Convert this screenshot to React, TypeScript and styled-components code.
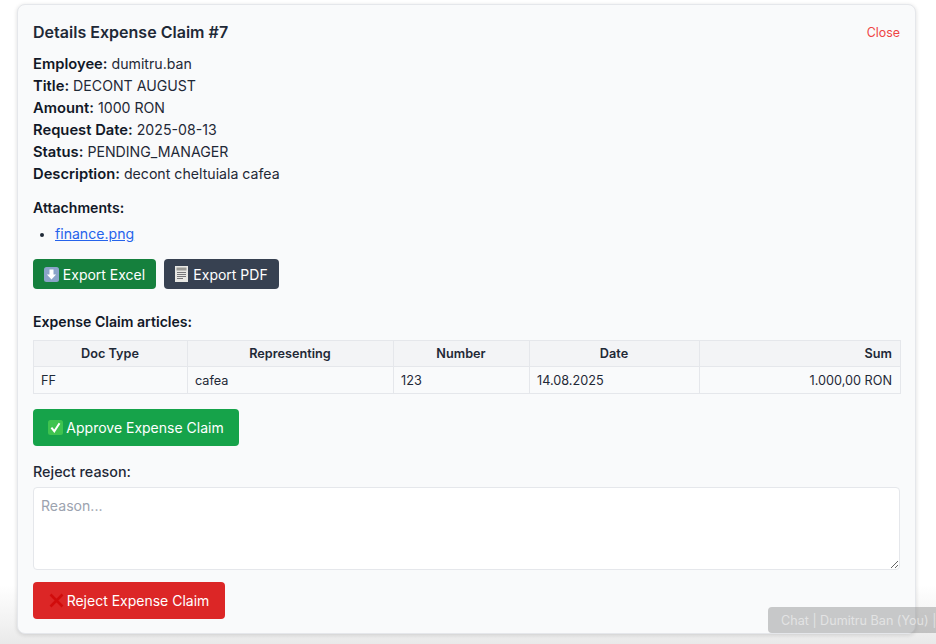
import React from "react";
import styled, { createGlobalStyle } from "styled-components";

const Global = createGlobalStyle`
  html, body { margin: 0; padding: 0; background: #fff; }
  body { font-family: Inter, "Liberation Sans", sans-serif; color: #1f2937; overflow: hidden; }
  * { box-sizing: border-box; }
`;

const Page = styled.div`
  position: relative;
  width: 936px;
  height: 644px;
  padding: 4px 20px 0 17px;
  overflow: hidden;
  background: linear-gradient(180deg, #fff 0, #fff 585px, #f1f1f1 625px, #e9e9e9 644px);
`;

const Card = styled.section`
  height: 630px;
  padding: 15px 15px 0 15px;
  background: #f9fafb;
  border: 1px solid #e5e7eb;
  border-radius: 8px;
  box-shadow: 0 1px 4px rgba(0, 0, 0, 0.14);
`;

const Header = styled.header`
  display: flex;
  justify-content: space-between;
  align-items: center;
  height: 24px;
  margin-bottom: 9px;
`;

const Title = styled.h2`
  margin: 0;
  font-size: 16.05px;
  line-height: 24px;
  font-weight: 600;
  color: #1f2937;
`;

const CloseLink = styled.a`
  font-size: 12.4px;
  color: #ef4444;
`;

const Info = styled.div`
  font-size: 14.15px;
  line-height: 22px;
  color: #1f2937;
`;

const InfoRow = styled.div`
  height: 22px;
`;

const Strong = styled.strong`
  font-size: 14.75px;
  font-weight: 600;
  color: #111827;
`;

const SectionLabel = styled.div<{ $top: number }>`
  margin-top: ${(p) => p.$top}px;
  font-size: 14.1px;
  line-height: 22px;
  font-weight: 600;
  color: #111827;
`;

const FileList = styled.ul`
  margin: 4px 0 0;
  padding: 0 0 0 22px;
  font-size: 14.1px;
  line-height: 22px;
  li::marker { font-size: 12px; }
`;

const FileLink = styled.a`
  color: #2563eb;
  text-decoration: underline;
`;

const Actions = styled.div`
  display: flex;
  gap: 8px;
  margin-top: 14px;
`;

const Button = styled.button<{ $bg: string; $w: number; $h: number; $gap: number }>`
  display: inline-flex;
  align-items: center;
  justify-content: center;
  gap: ${(p) => p.$gap}px;
  width: ${(p) => p.$w}px;
  height: ${(p) => p.$h}px;
  padding: 0;
  border: 0;
  border-radius: 4px;
  background: ${(p) => p.$bg};
  color: #fff;
  font-family: inherit;
  font-size: 14px;
`;

const Table = styled.table`
  width: 867px;
  margin-top: 7px;
  border-collapse: collapse;
  table-layout: fixed;
  font-size: 12.7px;
  color: #1f2937;
`;

const Th = styled.th<{ $w: number; $right?: boolean }>`
  width: ${(p) => p.$w}px;
  height: 26px;
  padding: 0 8px 0 7px;
  border: 1px solid #e5e7eb;
  background: #f3f4f6;
  font-weight: 600;
  text-align: ${(p) => (p.$right ? "right" : "center")};
`;

const Td = styled.td<{ $right?: boolean }>`
  height: 27px;
  padding: 0 8px 0 7px;
  border: 1px solid #e5e7eb;
  text-align: ${(p) => (p.$right ? "right" : "left")};
`;

const ApproveWrap = styled.div`
  margin-top: 15px;
`;

const FieldLabel = styled.label`
  display: block;
  margin-top: 15px;
  font-size: 14.35px;
  line-height: 22px;
  font-weight: 500;
  color: #1f2937;
`;

const Reason = styled.textarea`
  display: block;
  width: 867px;
  height: 83px;
  margin-top: 4px;
  padding: 8px 7px;
  border: 1px solid #e5e7eb;
  border-radius: 4px;
  background: #fff;
  font-family: inherit;
  font-size: 14.1px;
  line-height: 20px;
  &::placeholder { color: #9ca3af; }
`;

const RejectWrap = styled.div`
  margin-top: 12px;
`;

const ChatBar = styled.div`
  position: absolute;
  left: 768px;
  top: 607px;
  width: 180px;
  height: 26px;
  padding: 1px 0 0 13px;
  border-radius: 4px;
  background: rgba(130, 130, 130, 0.42);
  color: rgba(255, 255, 255, 0.5);
  font-size: 12.6px;
  line-height: 26px;
  white-space: nowrap;
`;

const DownloadIcon = () => (
  <svg width="15" height="15" viewBox="0 0 15 15" aria-hidden="true">
    <rect width="15" height="15" rx="2.5" fill="#8ba4c9" />
    <path d="M5.5 2.5h4v5h2.6L7.5 12.5 2.9 7.5h2.6z" fill="#fff" />
  </svg>
);

const LedgerIcon = () => (
  <svg width="13" height="16" viewBox="0 0 13 16" aria-hidden="true">
    <rect width="13" height="16" fill="#e8e8e4" />
    <rect x="1.5" y="1.5" width="10" height="3" fill="#9a9a96" />
    <path d="M2 6.5h9M2 8.5h9M2 10.5h9M2 12.5h6" stroke="#77777a" strokeWidth="1" />
  </svg>
);

const CheckIcon = () => (
  <svg width="15" height="15" viewBox="0 0 15 15" aria-hidden="true">
    <rect width="15" height="15" rx="2.5" fill="#3fc34f" />
    <path d="M3.4 7.6l2.9 3.6 5.2-8" fill="none" stroke="#fff" strokeWidth="2" />
  </svg>
);

const CrossIcon = () => (
  <svg width="15" height="15" viewBox="0 0 15 15" aria-hidden="true">
    <path d="M1.5 1.5l12 12M13.5 1.5l-12 12" stroke="#d10c0c" strokeWidth="2.6" />
  </svg>
);

const info: [string, string][] = [
  ["Employee:", "dumitru.ban"],
  ["Title:", "DECONT AUGUST"],
  ["Amount:", "1000 RON"],
  ["Request Date:", "2025-08-13"],
  ["Status:", "PENDING_MANAGER"],
  ["Description:", "decont cheltuiala cafea"],
];

export default function App() {
  return (
    <>
      <Global />
      <Page>
        <Card>
          <Header>
            <Title>Details Expense Claim #7</Title>
            <CloseLink>Close</CloseLink>
          </Header>
          <Info>
            {info.map(([k, v]) => (
              <InfoRow key={k}>
                <Strong>{k}</Strong> {v}
              </InfoRow>
            ))}
          </Info>
          <SectionLabel $top={12}>Attachments:</SectionLabel>
          <FileList>
            <li>
              <FileLink>finance.png</FileLink>
            </li>
          </FileList>
          <Actions>
            <Button $bg="#15803d" $w={123} $h={30} $gap={4}>
              <DownloadIcon /> Export Excel
            </Button>
            <Button $bg="#374151" $w={115} $h={30} $gap={5}>
              <LedgerIcon /> Export PDF
            </Button>
          </Actions>
          <SectionLabel $top={22}>Expense Claim articles:</SectionLabel>
          <Table>
            <thead>
              <tr>
                <Th $w={154}>Doc Type</Th>
                <Th $w={206}>Representing</Th>
                <Th $w={136}>Number</Th>
                <Th $w={170}>Date</Th>
                <Th $w={201} $right>Sum</Th>
              </tr>
            </thead>
            <tbody>
              <tr>
                <Td>FF</Td>
                <Td>cafea</Td>
                <Td>123</Td>
                <Td>14.08.2025</Td>
                <Td $right>1.000,00 RON</Td>
              </tr>
            </tbody>
          </Table>
          <ApproveWrap>
            <Button $bg="#16a34a" $w={206} $h={37} $gap={3}>
              <CheckIcon /> Approve Expense Claim
            </Button>
          </ApproveWrap>
          <FieldLabel htmlFor="reason">Reject reason:</FieldLabel>
          <Reason id="reason" placeholder="Reason..." />
          <RejectWrap>
            <Button $bg="#dc2626" $w={192} $h={37} $gap={3}>
              <CrossIcon /> Reject Expense Claim
            </Button>
          </RejectWrap>
        </Card>
        <ChatBar>Chat | Dumitru Ban (You) |</ChatBar>
      </Page>
    </>
  );
}
